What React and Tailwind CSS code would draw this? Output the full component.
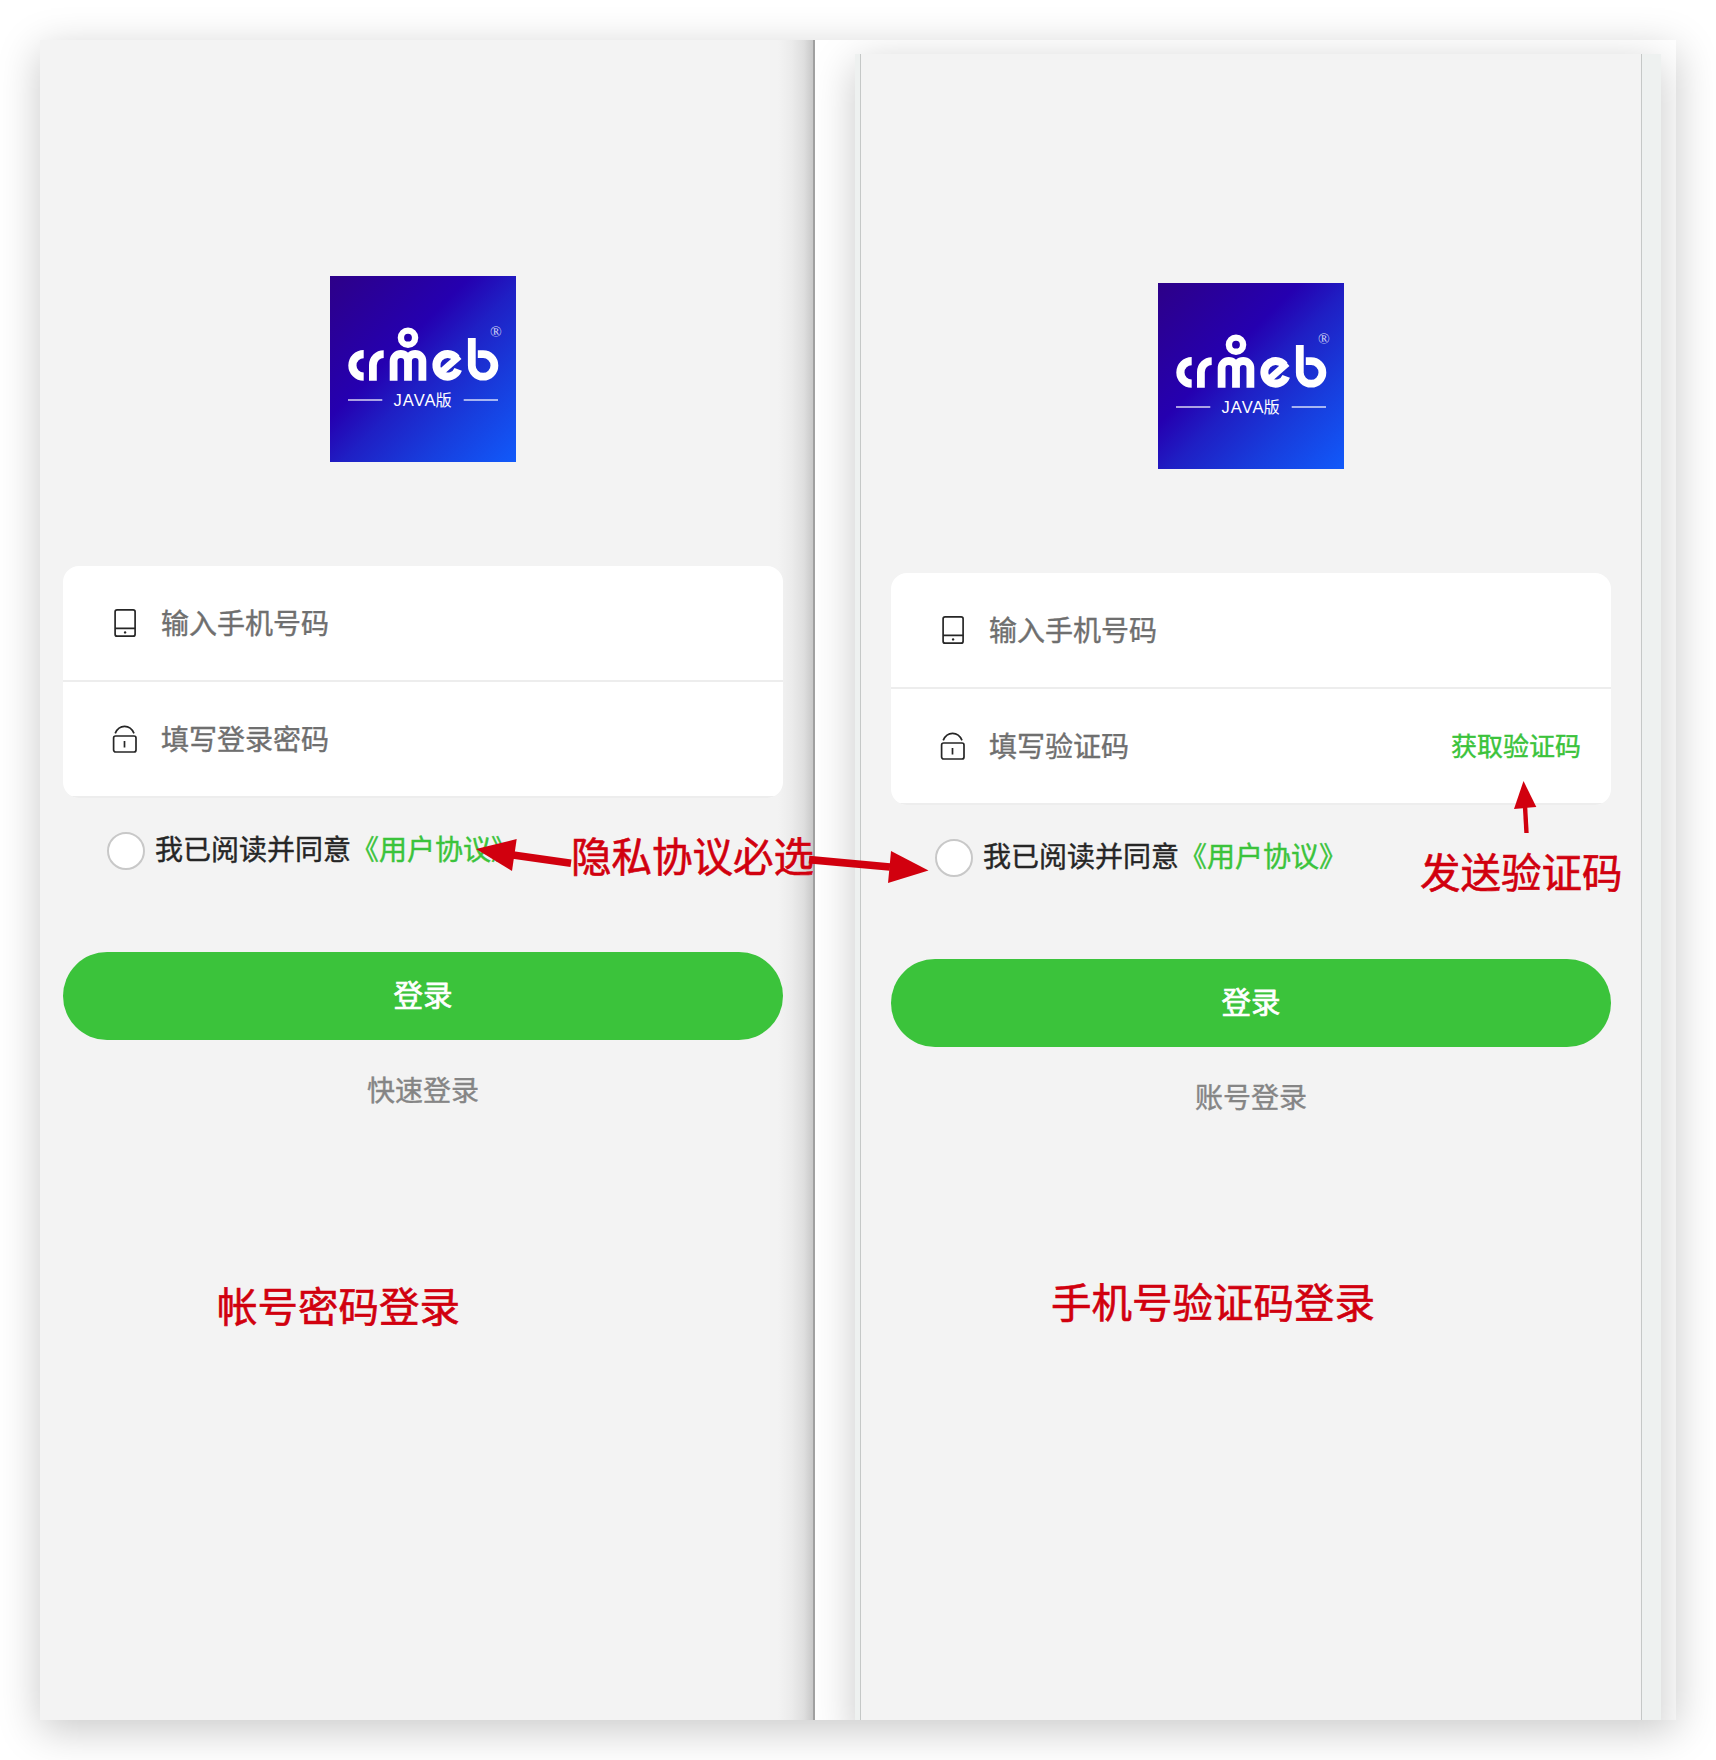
import React from "react";

const CJK = "font-['Noto_Sans_CJK_SC','Liberation_Sans',sans-serif]";

function Logo() {
  return (
    <div className="mx-auto size-[186px] bg-[linear-gradient(135deg,#2d0088_0%,#2500b0_38%,#1f1fc4_53%,#183cdc_74%,#115afa_100%)]">
      <svg viewBox="0 0 186 186" className="block size-full" fill="none">
        <g stroke="#fff" strokeWidth="7.8">
          <path d="M33.7 78.1A11.3 11.3 0 0 0 33.7 100.7" strokeWidth="8.2" />
          <path d="M42.9 104.8V89A10.8 10.9 0 0 1 53.7 78.1" />
          <path d="M63.6 104.8V85.2A7.2 7.2 0 0 1 78 85.2V104.8M78 85.2A7.2 7.2 0 0 1 92.4 85.2V104.8" />
          <circle cx="78" cy="61.7" r="7.1" strokeWidth="6.4" />
          <path d="M126.4 82.1A11.3 11.3 0 1 0 128.2 93.4" strokeWidth="8" />
          <path d="M109.6 97.5L129.2 80.4" strokeWidth="6.8" />
          <path d="M141.8 62V89.4A11.3 11.3 0 1 0 153.1 78.1H147.8" />
        </g>
        <path d="M18 124H52.3M133.7 124H168" stroke="#fff" strokeOpacity=".62" strokeWidth="1.8" />
        <text x="160" y="60.6" fill="#fff" fillOpacity=".8" fontSize="15.5" fontFamily="Liberation Serif, serif">®</text>
        <text x="63.4" y="130" fill="#fff" fontSize="16.5" textLength="42.2" fontFamily="Liberation Sans, sans-serif">JAVA</text>
        <text x="105.6" y="130" fill="#fff" fontSize="16.2" fontFamily="Noto Sans CJK SC, sans-serif">版</text>
      </svg>
    </div>
  );
}

function PhoneIcon() {
  return (
    <svg viewBox="0 0 26 30" className="h-[30px] w-[26px]" fill="none" stroke="#262626" strokeWidth="1.7">
      <rect x="3.1" y="1.8" width="20" height="26.4" rx="2" />
      <path d="M3.1 20.4H23.1" />
      <circle cx="13.1" cy="24.4" r="1.2" fill="#262626" stroke="none" />
    </svg>
  );
}

function LockIcon() {
  return (
    <svg viewBox="0 0 26 30" className="h-[30px] w-[26px]" fill="none" stroke="#262626" strokeWidth="1.7">
      <rect x="1.6" y="12" width="22.4" height="16" rx="2" />
      <path d="M3.2 9.3C5.1 4.8 8.7 2.3 12.6 2.3S20.1 4.8 22 9.3" />
      <path d="M12.5 17V23.4" />
    </svg>
  );
}

function Field({ icon, label, action }) {
  return (
    <div className="flex h-[116px] items-center border-b-2 border-[#ededed] pr-[30px] pl-[49px]">
      {icon}
      <span className="ml-[23px] grow pb-[2px] text-[28px] leading-none text-[#6f6f6f]">{label}</span>
      {action && <span className="pb-[2px] text-[26px] leading-none text-[#3bc33b]">{action}</span>}
    </div>
  );
}

function LoginScreen({ codeLabel, action, other }) {
  return (
    <div className="[-webkit-text-stroke:0.4px]">
      <Logo />
      <div className="mt-[104px] overflow-hidden rounded-[16px] bg-white">
        <Field icon={<PhoneIcon />} label="输入手机号码" />
        <Field icon={<LockIcon />} label={codeLabel} action={action} />
      </div>
      <div className="mt-[34px] flex h-[38px] items-center pl-[44px] text-[28px] leading-none text-[#262626]">
        <span className="mr-[10px] size-[38px] rounded-full border-2 border-[#c8c8c8] bg-white" />
        <span className="pb-[6px]">我已阅读并同意</span>
        <span className="pb-[6px] text-[#3bc33b]">《用户协议》</span>
      </div>
      <div className="mt-[82px] flex h-[88px] items-center justify-center rounded-full bg-[#3bc33b] pb-[4px] text-[29.5px] leading-none text-white [-webkit-text-stroke:0.7px]">
        登录
      </div>
      <div className="mt-[35px] text-center text-[28px] leading-none text-[#858585]">{other}</div>
    </div>
  );
}

const noteClass =
  "absolute text-[40.5px] leading-[40px] whitespace-nowrap text-[#d1000e] [-webkit-text-stroke:0.6px]";

export default function App() {
  return (
    <div className={`relative h-[1760px] w-[1716px] overflow-hidden bg-white p-[40px] ${CJK}`}>
      <div className="flex h-[1680px] w-[1636px] bg-white shadow-[0_10px_40px_rgba(0,0,0,0.22)]">
        <div className="flex w-[775px] border-r-2 border-[#a0a0a0] bg-[linear-gradient(to_right,#f3f3f3_738px,#ebebeb_752px,#dedede_764px,#c8c8c8_773px)]">
          <div className="w-full pt-[236px] pr-[30px] pl-[23px]">
            <LoginScreen codeLabel="填写登录密码" other="快速登录" />
          </div>
        </div>
        <div className="flex w-[861px] overflow-hidden pt-[14px] pl-[40px]">
          <div className="h-[1680px] w-[806px] shrink-0 bg-[#eef1f0] pl-[5px] shadow-[0_10px_40px_rgba(0,0,0,0.22)]">
            <div className="h-full w-[782px] border-x border-[#c5c8c7] bg-[#f3f3f3] px-[30px] pt-[229px]">
              <LoginScreen codeLabel="填写验证码" action="获取验证码" other="账号登录" />
            </div>
          </div>
        </div>
      </div>

      <span className={`${noteClass} top-[835px] left-[571px]`}>隐私协议必选</span>
      <span className={`${noteClass} top-[851px] left-[1420px]`}>发送验证码</span>
      <span className={`${noteClass} top-[1285px] left-[217px]`}>帐号密码登录</span>
      <span className={`${noteClass} top-[1281px] left-[1051px]`}>手机号验证码登录</span>
      <svg viewBox="0 0 1716 1760" className="absolute inset-0 size-full" fill="#d1000e" stroke="#d1000e">
        <path d="M476 849L516.7 839L512 871Z" stroke="none" />
        <path d="M571 863.3L513 855" strokeWidth="7.6" />
        <path d="M928.5 870.5L891 851L888 883Z" stroke="none" />
        <path d="M809 859.6L890 867" strokeWidth="7.6" />
        <path d="M1523.5 781L1514 809L1536.3 807Z" stroke="none" />
        <path d="M1526.5 833L1525 806" strokeWidth="4.4" />
      </svg>
    </div>
  );
}
